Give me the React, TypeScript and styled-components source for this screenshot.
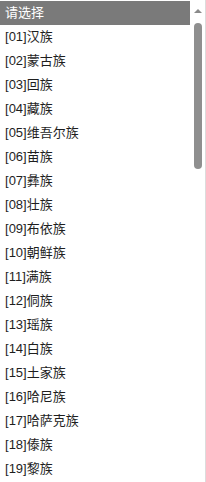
import React from "react";
import styled, { createGlobalStyle } from "styled-components";

const GlobalStyle = createGlobalStyle`
  html, body {
    margin: 0;
    padding: 0;
    background: #ffffff;
  }
  body {
    font-family: "Liberation Sans", "Noto Sans CJK SC", sans-serif;
  }
`;

const Dropdown = styled.div`
  width: 206px;
  height: 482px;
  display: flex;
  overflow: hidden;
  background: #ffffff;
  border-right: 1px solid #dcdcdc;
  box-sizing: border-box;
`;

const List = styled.ul`
  flex: 1;
  margin: 0;
  padding: 1px 0 0 0;
  list-style: none;
`;

const Option = styled.li<{ $selected?: boolean }>`
  height: 24px;
  line-height: 24px;
  padding-left: 5px;
  font-size: 13px;
  color: ${(p) => (p.$selected ? "#ffffff" : "#1e1e1e")};
  background: ${(p) => (p.$selected ? "#7a7a7a" : "transparent")};
  white-space: nowrap;
`;

const Scrollbar = styled.div`
  width: 15px;
  display: flex;
  flex-direction: column;
  align-items: center;
  padding-top: 9px;
  box-sizing: border-box;
`;

const Arrow = styled.div`
  width: 0;
  height: 0;
  border-left: 4px solid transparent;
  border-right: 4px solid transparent;
  border-bottom: 4px solid #8a8a8a;
  margin-left: 1px;
`;

const Thumb = styled.div`
  width: 8px;
  height: 146px;
  margin-top: 10px;
  margin-left: 1px;
  border-radius: 4px;
  background: #8f8f8f;
`;

const nations = [
  "汉族", "蒙古族", "回族", "藏族", "维吾尔族", "苗族", "彝族", "壮族",
  "布依族", "朝鲜族", "满族", "侗族", "瑶族", "白族", "土家族", "哈尼族",
  "哈萨克族", "傣族", "黎族",
];

const App = () => {
  return (
    <>
      <GlobalStyle />
      <Dropdown>
        <List>
          <Option $selected>请选择</Option>
          {nations.map((n, i) => (
            <Option key={n}>
              [{String(i + 1).padStart(2, "0")}]{n}
            </Option>
          ))}
        </List>
        <Scrollbar>
          <Arrow />
          <Thumb />
        </Scrollbar>
      </Dropdown>
    </>
  );
};

export default App;
